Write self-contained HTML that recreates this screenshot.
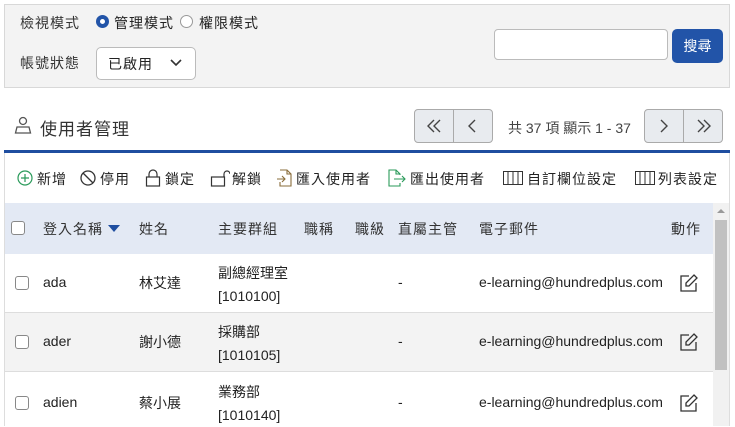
<!DOCTYPE html><html><head><meta charset="utf-8"><style>
*{box-sizing:border-box;margin:0;padding:0}
body{width:735px;height:426px;overflow:hidden;background:#fff;font-family:"Liberation Sans","Noto Sans CJK TC",sans-serif;font-size:14px;color:#222;position:relative}
.a{position:absolute;white-space:nowrap}
.t{letter-spacing:1px}
svg{position:absolute}
</style></head><body>
<div class="a" style="left:4px;top:4px;width:726px;height:84px;background:#f3f3f3;border:1px solid #d8d8d8"></div>
<div class="a t" style="left:20px;top:13px;color:#333">檢視模式</div>
<div class="a" style="left:96px;top:15px;width:13px;height:13px;border-radius:50%;background:#fff;border:4px solid #2254a8"></div>
<div class="a t" style="left:114px;top:13px">管理模式</div>
<div class="a" style="left:180px;top:15px;width:13px;height:13px;border-radius:50%;background:#fff;border:1px solid #999"></div>
<div class="a t" style="left:199px;top:13px">權限模式</div>
<div class="a t" style="left:20px;top:53px;color:#333">帳號狀態</div>
<div class="a" style="left:96px;top:47px;width:100px;height:33px;border:1px solid #bbb;border-radius:5px;background:#fff"></div>
<div class="a t" style="left:108px;top:54px">已啟用</div>
<svg style="left:170px;top:59px" width="12" height="8"><path d="M1 1l5 5 5-5" fill="none" stroke="#333" stroke-width="1.6"/></svg>
<div class="a" style="left:494px;top:29px;width:174px;height:31px;border:1px solid #bbb;border-radius:4px;background:#fff"></div>
<div class="a" style="left:672px;top:29px;width:51px;height:34px;border-radius:5px;background:#2254a8;color:#fff;text-align:center;line-height:34px">搜尋</div>

<svg style="left:14px;top:116px" width="18" height="18"><circle cx="9" cy="5" r="3.5" fill="none" stroke="#555" stroke-width="1.3"/><path d="M3 11h12l1.5 6H1.5z" fill="none" stroke="#555" stroke-width="1.3"/></svg>
<div class="a t" style="left:40px;top:115px;font-size:17px;color:#333">使用者管理</div>
<div class="a" style="left:414px;top:109px;width:79px;height:34px;border:1px solid #aaa;border-radius:4px;background:#e8ebef"></div>
<div class="a" style="left:453px;top:109px;width:1px;height:34px;background:#aaa"></div>
<svg style="left:427px;top:119px" width="14" height="14"><path d="M7 1L1 7l6 6M13 1L7 7l6 6" fill="none" stroke="#444" stroke-width="1.4"/></svg>
<svg style="left:468px;top:119px" width="8" height="14"><path d="M7 1L1 7l6 6" fill="none" stroke="#444" stroke-width="1.4"/></svg>
<div class="a" style="left:508px;top:118px;color:#444">共 37 項 顯示 1 - 37</div>
<div class="a" style="left:644px;top:109px;width:79px;height:34px;border:1px solid #aaa;border-radius:4px;background:#e8ebef"></div>
<div class="a" style="left:683px;top:109px;width:1px;height:34px;background:#aaa"></div>
<svg style="left:660px;top:119px" width="8" height="14"><path d="M1 1l6 6-6 6" fill="none" stroke="#444" stroke-width="1.4"/></svg>
<svg style="left:697px;top:119px" width="14" height="14"><path d="M1 1l6 6-6 6M7 1l6 6-6 6" fill="none" stroke="#444" stroke-width="1.4"/></svg>

<div class="a" style="left:4px;top:150px;width:726px;height:3px;background:#1f4ea0"></div>
<div class="a" style="left:4px;top:153px;width:1px;height:273px;background:#ddd"></div>
<div class="a" style="left:729px;top:153px;width:1px;height:273px;background:#ddd"></div>

<svg style="left:17px;top:170px" width="16" height="16"><circle cx="8" cy="8" r="7" fill="none" stroke="#2a9a5a" stroke-width="1.2"/><path d="M8 4v8M4 8h8" stroke="#2a9a5a" stroke-width="1.2"/></svg>
<div class="a t" style="left:37px;top:169px">新增</div>
<svg style="left:80px;top:170px" width="16" height="16"><circle cx="8" cy="8" r="7" fill="none" stroke="#333" stroke-width="1.3"/><path d="M3 3l10 10" stroke="#333" stroke-width="1.3"/></svg>
<div class="a t" style="left:100px;top:169px">停用</div>
<svg style="left:145px;top:169px" width="16" height="18"><path d="M4 8V5a4 4 0 0 1 8 0v3" fill="none" stroke="#333" stroke-width="1.2"/><rect x="1.5" y="8" width="13" height="9" fill="none" stroke="#333" stroke-width="1.2"/></svg>
<div class="a t" style="left:165px;top:169px">鎖定</div>
<svg style="left:210px;top:169px" width="20" height="18"><path d="M14 8V5a3 3 0 0 1 6 0" fill="none" stroke="#333" stroke-width="1.2"/><rect x="1.5" y="8" width="13" height="9" fill="none" stroke="#333" stroke-width="1.2"/></svg>
<div class="a t" style="left:232px;top:169px">解鎖</div>
<svg style="left:276px;top:169px" width="16" height="18"><path d="M4 1h7l4 4v12H4v-4M11 1v4h4" fill="none" stroke="#8a6d3b" stroke-width="1.1"/><path d="M1 10h8M6 7l3 3-3 3" fill="none" stroke="#8a6d3b" stroke-width="1.1"/></svg>
<div class="a t" style="left:296px;top:169px">匯入使用者</div>
<svg style="left:388px;top:169px" width="18" height="18"><path d="M12 6V5L8 1H1v16h11v-3M8 1v4h4" fill="none" stroke="#2a9a5a" stroke-width="1.1"/><path d="M6 10h11M14 7l3 3-3 3" fill="none" stroke="#2a9a5a" stroke-width="1.1"/></svg>
<div class="a t" style="left:410px;top:169px">匯出使用者</div>
<svg style="left:503px;top:171px" width="20" height="14"><rect x="0.5" y="0.5" width="19" height="13" fill="none" stroke="#333"/><path d="M5 0v14M10 0v14M15 0v14" stroke="#333"/></svg>
<div class="a t" style="left:527px;top:169px">自訂欄位設定</div>
<svg style="left:635px;top:171px" width="20" height="14"><rect x="0.5" y="0.5" width="19" height="13" fill="none" stroke="#333"/><path d="M5 0v14M10 0v14M15 0v14" stroke="#333"/></svg>
<div class="a t" style="left:658px;top:169px">列表設定</div>

<div class="a" style="left:5px;top:203px;width:708px;height:51px;background:#e3e9f4"></div>
<div class="a" style="left:713px;top:203px;width:16px;height:223px;background:#f1f1f1"></div>
<div class="a" style="left:715px;top:220px;width:12px;height:150px;background:#c1c1c1"></div>
<svg style="left:717px;top:208px" width="8" height="6"><path d="M0 5L4 1l4 4z" fill="#999"/></svg>

<div class="a" style="left:11px;top:221px;width:14px;height:14px;border:1px solid #888;border-radius:3px;background:#fff"></div>
<div class="a t" style="left:43px;top:219px;color:#333">登入名稱</div>
<svg style="left:108px;top:225px" width="12" height="8"><path d="M0 0h12L6 7z" fill="#1f4ea0"/></svg>
<div class="a t" style="left:139px;top:219px;color:#333">姓名</div>
<div class="a t" style="left:218px;top:219px;color:#333">主要群組</div>
<div class="a t" style="left:304px;top:219px;color:#333">職稱</div>
<div class="a t" style="left:355px;top:219px;color:#333">職級</div>
<div class="a t" style="left:398px;top:219px;color:#333">直屬主管</div>
<div class="a t" style="left:479px;top:219px;color:#333">電子郵件</div>
<div class="a t" style="left:671px;top:219px;color:#333">動作</div>

<div class="a" style="left:5px;top:312px;width:708px;height:60px;background:#f3f3f3;border-top:1px solid #ddd;border-bottom:1px solid #ddd"></div>

<div class="a" style="left:15px;top:276px;width:14px;height:14px;border:1px solid #888;border-radius:3px;background:#fff"></div>
<div class="a" style="left:43px;top:274px">ada</div><div class="a" style="left:139px;top:273px">林艾達</div>
<div class="a" style="left:218px;top:262px;line-height:23px">副總經理室<br>[1010100]</div>
<div class="a" style="left:398px;top:274px">-</div><div class="a" style="left:479px;top:274px">e-learning@hundredplus.com</div>

<div class="a" style="left:15px;top:335px;width:14px;height:14px;border:1px solid #888;border-radius:3px;background:#fff"></div>
<div class="a" style="left:43px;top:333px">ader</div><div class="a" style="left:139px;top:332px">謝小德</div>
<div class="a" style="left:218px;top:321px;line-height:23px">採購部<br>[1010105]</div>
<div class="a" style="left:398px;top:333px">-</div><div class="a" style="left:479px;top:333px">e-learning@hundredplus.com</div>

<div class="a" style="left:15px;top:396px;width:14px;height:14px;border:1px solid #888;border-radius:3px;background:#fff"></div>
<div class="a" style="left:43px;top:394px">adien</div><div class="a" style="left:139px;top:393px">蔡小展</div>
<div class="a" style="left:218px;top:381px;line-height:23px">業務部<br>[1010140]</div>
<div class="a" style="left:398px;top:394px">-</div><div class="a" style="left:479px;top:394px">e-learning@hundredplus.com</div>

<svg style="left:680px;top:274px" width="18" height="18"><path d="M9 2H1v15h15V9" fill="none" stroke="#333" stroke-width="1.3"/><path d="M14 1l3 3-8 8H6V9z" fill="none" stroke="#333" stroke-width="1.3"/></svg>
<svg style="left:680px;top:333px" width="18" height="18"><path d="M9 2H1v15h15V9" fill="none" stroke="#333" stroke-width="1.3"/><path d="M14 1l3 3-8 8H6V9z" fill="none" stroke="#333" stroke-width="1.3"/></svg>
<svg style="left:680px;top:394px" width="18" height="18"><path d="M9 2H1v15h15V9" fill="none" stroke="#333" stroke-width="1.3"/><path d="M14 1l3 3-8 8H6V9z" fill="none" stroke="#333" stroke-width="1.3"/></svg>
</body></html>
